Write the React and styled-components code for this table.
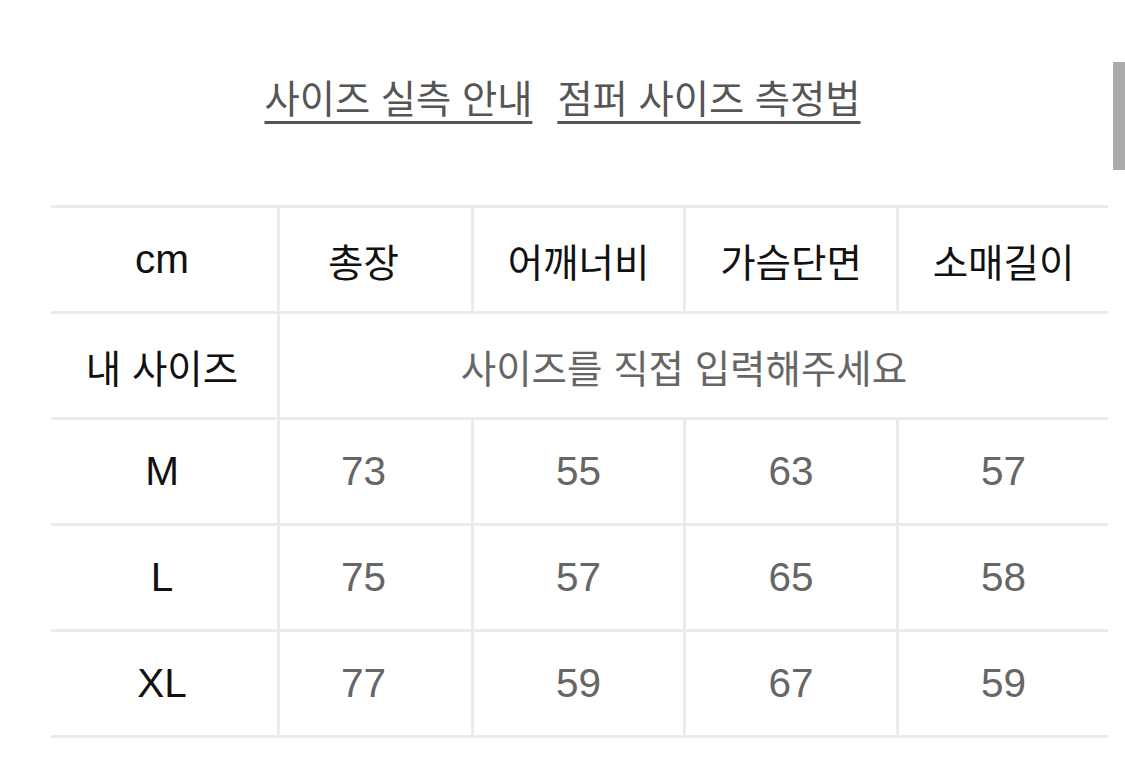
import React from "react";
import styled, { createGlobalStyle } from "styled-components";

const Global = createGlobalStyle`
  html, body { margin: 0; padding: 0; background: #fff; }
  body { font-family: "Liberation Sans", "Noto Sans CJK KR", sans-serif; overflow: hidden; }
`;

const Page = styled.div`
  position: relative;
  width: 1125px;
  height: 765px;
  background: #fff;
  display: flex;
  flex-direction: column;
`;

const Links = styled.div`
  display: flex;
  justify-content: center;
  gap: 25px;
  padding-top: 76px;
  height: 130px;
  box-sizing: border-box;
`;

const Link = styled.a`
  font-family: "Liberation Sans", "Noto Sans CJK KR", sans-serif;
  font-size: 38.3px;
  line-height: 48px;
  color: #555;
  text-decoration: underline;
  text-decoration-thickness: 3px;
  text-underline-offset: 8px;
  text-decoration-color: #555;
  cursor: pointer;
`;

const Table = styled.div`
  margin: 75px 0 0 51px;
  display: grid;
  grid-template-columns: 226px 194px 212px 213px 212px;
  border-top: 3px solid #ebebeb;
  width: 1057px;
`;

const Cell = styled.div`
  height: 103px;
  border-bottom: 3px solid #ebebeb;
  border-left: ${(p) => (p.$first ? "none" : "3px solid #ebebeb")};
  display: flex;
  align-items: center;
  justify-content: center;
  padding-right: ${(p) => p.$pr || 0}px;
  font-family: "Liberation Sans", "Noto Sans CJK KR", sans-serif;
  font-size: ${(p) => (p.$latin ? "40.5px" : "38.5px")};
  color: ${(p) => (p.$muted ? "#666" : "#111")};
  grid-column: ${(p) => p.$span || "auto"};
  box-sizing: border-box;
  height: 106px;
`;

const Scrollbar = styled.div`
  position: absolute;
  right: 0;
  top: 62px;
  width: 12px;
  height: 108px;
  background: #aaa;
`;

const headers = ["총장", "어깨너비", "가슴단면", "소매길이"];
const rows = [
  ["M", 73, 55, 63, 57],
  ["L", 75, 57, 65, 58],
  ["XL", 77, 59, 67, 59],
];
const pads = [4, 24, 0, 0, 0];

export default function App() {
  return (
    <>
      <Global />
      <Page>
        <Links>
          <Link>사이즈 실측 안내</Link>
          <Link>점퍼 사이즈 측정법</Link>
        </Links>
        <Table>
          <Cell $first $latin $pr={pads[0]}>cm</Cell>
          {headers.map((h, i) => (
            <Cell key={h} $pr={pads[i + 1]}>{h}</Cell>
          ))}
          <Cell $first $pr={pads[0]}>내 사이즈</Cell>
          <Cell $span="2 / 6" $muted $pr={20}>사이즈를 직접 입력해주세요</Cell>
          {rows.map((r) =>
            r.map((v, i) => (
              <Cell key={r[0] + i} $first={i === 0} $latin $muted={i !== 0} $pr={pads[i]}>
                {v}
              </Cell>
            ))
          )}
        </Table>
        <Scrollbar />
      </Page>
    </>
  );
}
